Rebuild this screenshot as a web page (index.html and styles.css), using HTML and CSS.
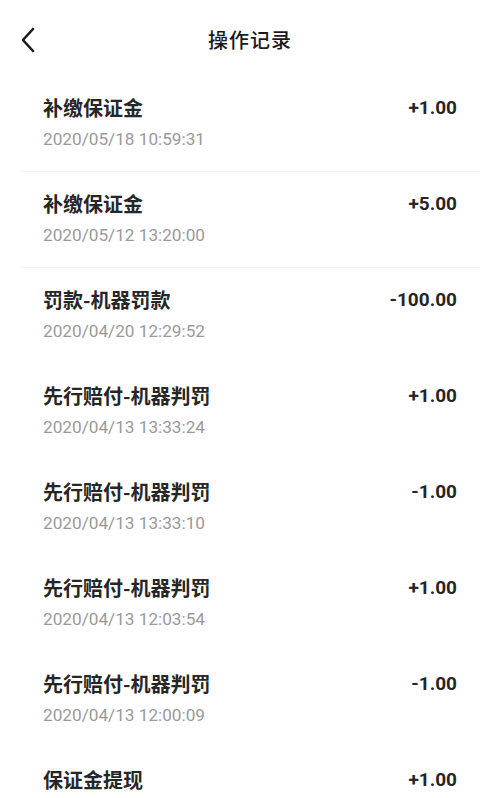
FILE: index.html
```html
<!DOCTYPE html>
<html lang="zh-CN">
<head>
<meta charset="utf-8">
<title>操作记录</title>
<link rel="stylesheet" href="styles.css">
</head>
<body>
<div class="page">
  <header class="header">
    <svg class="back" width="16" height="26" viewBox="0 0 16 26"><path d="M13 2 L3 13 L13 24" fill="none" stroke="#1a1a1a" stroke-width="2.6" stroke-linecap="round" stroke-linejoin="round"/></svg>
    <h1 class="title">操作记录</h1>
  </header>
  <ul class="list">
    <li class="row sep"><div class="info"><div class="name">补缴保证金</div><div class="time">2020/05/18 10:59:31</div></div><div class="amount">+1.00</div></li>
    <li class="row sep"><div class="info"><div class="name">补缴保证金</div><div class="time">2020/05/12 13:20:00</div></div><div class="amount">+5.00</div></li>
    <li class="row"><div class="info"><div class="name">罚款-机器罚款</div><div class="time">2020/04/20 12:29:52</div></div><div class="amount">-100.00</div></li>
    <li class="row"><div class="info"><div class="name">先行赔付-机器判罚</div><div class="time">2020/04/13 13:33:24</div></div><div class="amount">+1.00</div></li>
    <li class="row"><div class="info"><div class="name">先行赔付-机器判罚</div><div class="time">2020/04/13 13:33:10</div></div><div class="amount">-1.00</div></li>
    <li class="row"><div class="info"><div class="name">先行赔付-机器判罚</div><div class="time">2020/04/13 12:03:54</div></div><div class="amount">+1.00</div></li>
    <li class="row"><div class="info"><div class="name">先行赔付-机器判罚</div><div class="time">2020/04/13 12:00:09</div></div><div class="amount">-1.00</div></li>
    <li class="row"><div class="info"><div class="name">保证金提现</div></div><div class="amount">+1.00</div></li>
  </ul>
</div>
</body>
</html>
```
FILE: styles.css
```css
* { box-sizing: border-box; }
html, body { margin: 0; padding: 0; background: #fff; }
body {
  font-family: "Noto Sans CJK SC", "Noto Sans", sans-serif;
  color: #222;
  overflow: hidden;
}
.page { width: 500px; height: 798px; overflow: hidden; }
.header {
  height: 76px;
  padding-top: 26px;
  display: flex;
  justify-content: center;
  position: relative;
}
.back { position: absolute; left: 20px; top: 27px; }
.title {
  margin: 0;
  font-size: 20px;
  line-height: 28px;
  font-weight: 500;
  color: #1a1a1a;
  letter-spacing: 1px;
}
.list { list-style: none; margin: 0 20px; padding: 0; }
.row {
  height: 96px;
  padding: 18px 23px 0 23px;
  display: flex;
  justify-content: space-between;
  align-items: flex-start;
}
.row.sep { border-bottom: 1px solid #f2f2f2; }
.name {
  font-size: 20px;
  line-height: 28px;
  font-weight: 700;
  color: #262626;
}
.time {
  margin-top: 6px;
  font-family: Roboto, "Noto Sans", sans-serif;
  font-size: 17.2px;
  line-height: 22px;
  color: #9a9a9a;
}
.amount {
  font-family: Roboto, "Noto Sans", sans-serif;
  font-size: 19px;
  line-height: 28px;
  font-weight: 700;
  color: #262626;
}
```
